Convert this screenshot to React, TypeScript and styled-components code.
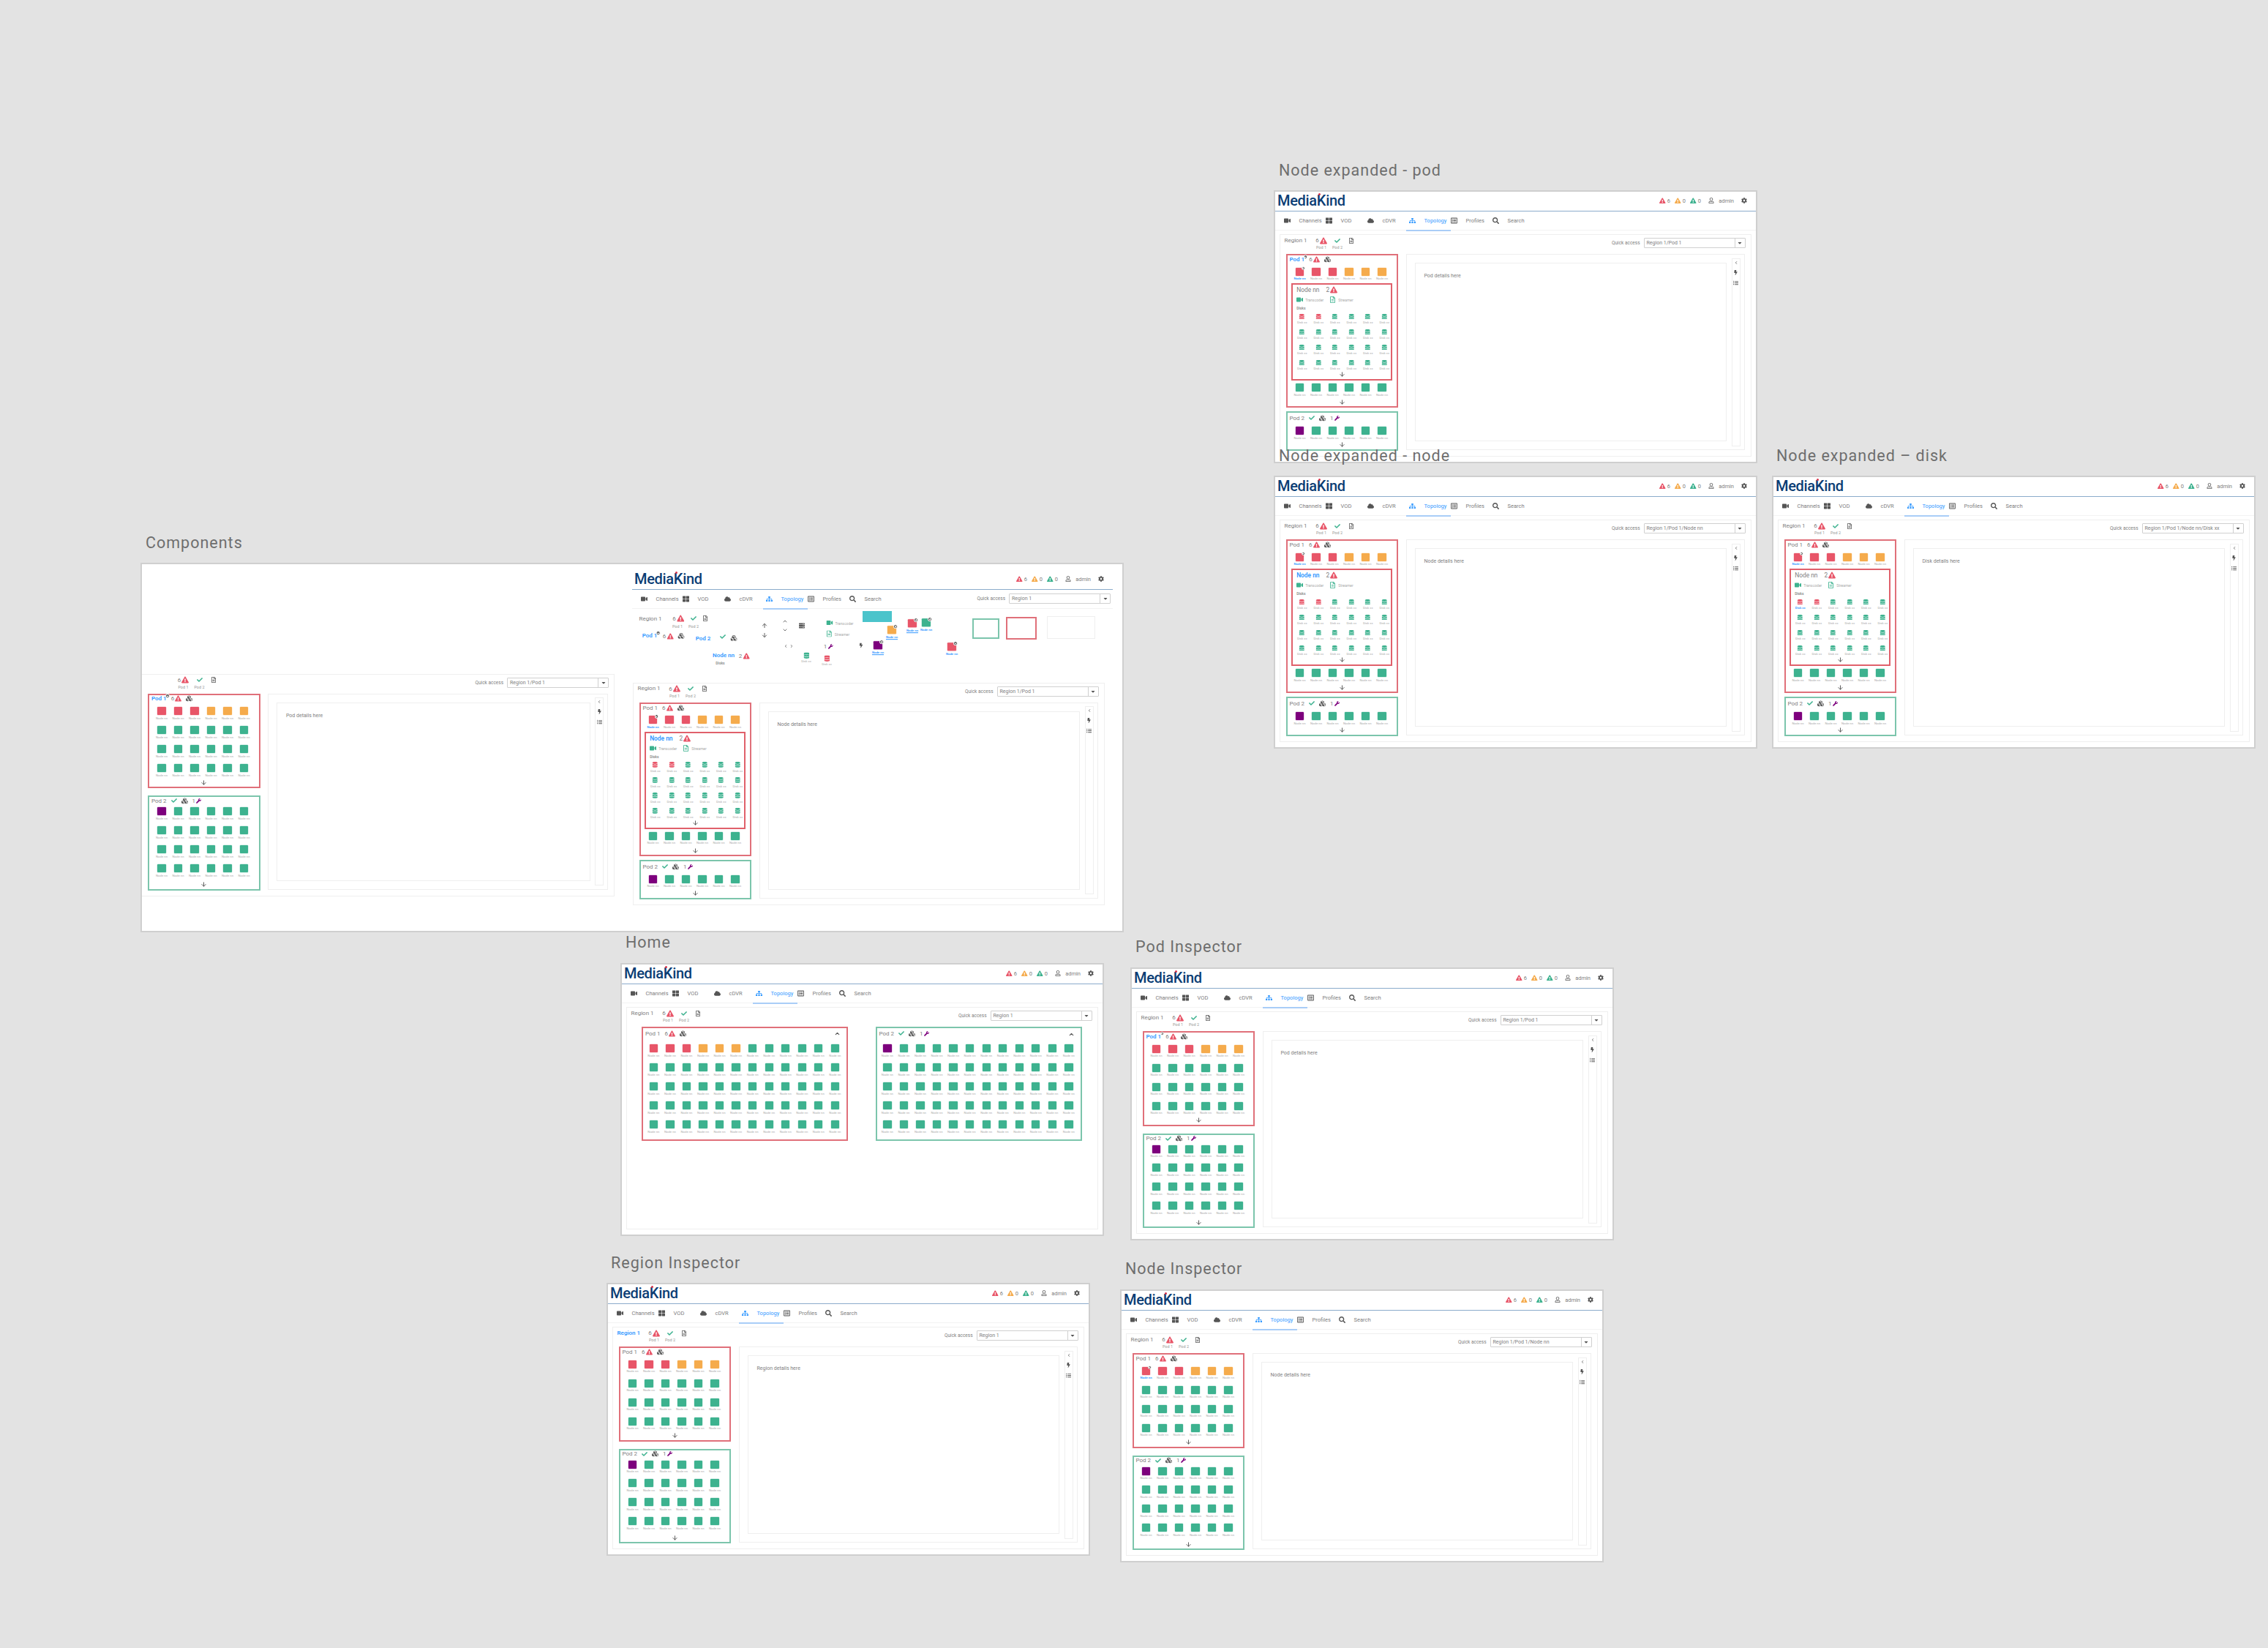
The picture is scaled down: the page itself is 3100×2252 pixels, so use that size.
import React from 'react';
import styled, { createGlobalStyle } from 'styled-components';
import {
  FaVideo, FaThLarge, FaCloud, FaSitemap, FaRegListAlt, FaSearch, FaRegUser, FaCog,
  FaExclamationTriangle, FaCheck, FaRegFileAlt, FaCubes, FaWrench, FaBolt, FaListUl,
  FaDatabase, FaCaretDown, FaServer,
} from 'react-icons/fa';
import { ArrowUp, ArrowDown, ChevronUp, ChevronDown, ChevronLeft, ChevronRight } from 'lucide-react';

const RED = '#E85568';
const ORANGE = '#F5AB4C';
const GREEN = '#3DB28F';
const PURPLE = '#7D007D';
const BLUE = '#3399FF';
const TEXT = '#808080';
const ICON = '#555555';
const RED_LINE = '#E0707A';
const GREEN_LINE = '#7CC5AC';
const HAIR = '#EFEFEF';

const Global = createGlobalStyle`
  html, body { margin: 0; padding: 0; background: #E3E3E3; }
  body { font-family: Roboto, "Liberation Sans", sans-serif; }
  * { box-sizing: border-box; }
`;

const Canvas = styled.div`
  position: relative;
  width: 3100px;
  height: 2252px;
  background: #e3e3e3;
  overflow: hidden;
`;

const BoardTitle = styled.div<{ $x: number; $y: number }>`
  position: absolute;
  left: ${p => p.$x}px;
  top: ${p => p.$y - 13}px;
  height: 26px;
  line-height: 26px;
  font-size: 21.5px;
  letter-spacing: 1px;
  color: #6e6e6e;
  white-space: nowrap;
  z-index: 2;
`;

const Artboard = styled.div<{ $x: number; $y: number; $w: number; $h: number }>`
  position: absolute;
  left: ${p => p.$x}px;
  top: ${p => p.$y}px;
  width: ${p => p.$w}px;
  height: ${p => p.$h}px;
  background: #fff;
  box-shadow: 0 0 0 2px #cfcfcf;
  overflow: hidden;
`;

const Frame = styled.div`
  width: 657px;
  height: 369px;
  display: flex;
  flex-direction: column;
`;

const SheetFrame = styled.div`
  position: absolute;
  left: 670px;
  top: 8px;
  width: 657px;
`;

const Placed = styled.div<{ $x: number; $y: number }>`
  position: absolute;
  left: ${p => p.$x}px;
  top: ${p => p.$y}px;
  transform: translate(-50%, -50%);
  display: flex;
  align-items: center;
  gap: 2px;
  white-space: nowrap;
`;

const PlacedPanel = styled.div<{ $x: number; $y: number }>`
  position: absolute;
  left: ${p => p.$x}px;
  top: ${p => p.$y}px;
`;

const Header = styled.header`
  height: 26.5px;
  flex: none;
  display: flex;
  align-items: center;
  padding: 0 12px 1.5px 3px;
  border-bottom: 1.5px solid #8babcb;
  font-size: 7.5px;
  color: ${TEXT};
`;

const Logo = styled.div`
  position: relative;
  font-family: Roboto, "Liberation Sans", sans-serif;
  font-size: 20px;
  font-weight: 500;
  line-height: 20px;
  letter-spacing: -0.3px;
  color: #0b3d74;
  &::after {
    content: '';
    position: absolute;
    left: 56px;
    top: 0;
    width: 3px;
    height: 3px;
    border-radius: 50%;
    background: #d8324a;
  }
`;

const Status = styled.span<{ $first?: boolean }>`
  display: flex;
  align-items: center;
  gap: 2px;
  width: 21px;
  margin-left: ${p => (p.$first ? 'auto' : '0')};
`;

const UserName = styled.span`
  display: flex;
  align-items: center;
  gap: 6px;
  margin-left: 4px;
`;

const GearSlot = styled.span`
  display: flex;
  margin-left: 10px;
`;

const Nav = styled.nav<{ $pad?: number }>`
  height: 26px;
  flex: none;
  display: flex;
  padding: 0 ${p => p.$pad ?? 0}px 0 8.5px;
  border-bottom: 1px solid #f3f3f3;
`;

const NavItem = styled.div<{ $active?: boolean }>`
  width: 57px;
  height: 26px;
  display: flex;
  align-items: center;
  gap: 8px;
  font-size: 7.5px;
  color: ${p => (p.$active ? BLUE : TEXT)};
  position: relative;
  &::after {
    content: '';
    display: ${p => (p.$active ? 'block' : 'none')};
    position: absolute;
    left: -1px;
    right: -3px;
    bottom: -1px;
    height: 1.5px;
    background: #a9cdf7;
  }
`;

const NavIcon = styled.span`
  width: 16px;
  display: flex;
  justify-content: center;
`;

const Panel = styled.section<{ $w: number; $h: number; $flat?: boolean }>`
  width: ${p => p.$w}px;
  height: ${p => p.$h}px;
  flex: none;
  display: flex;
  flex-direction: column;
  border: 1px solid ${HAIR};
  ${p => (p.$flat ? 'border-left: none;' : '')}
`;

const PanelSlot = styled.div`
  margin: 5.5px 0 0 5.5px;
`;

const RegionHead = styled.div`
  height: 26px;
  flex: none;
  display: flex;
  align-items: flex-start;
  padding: 0 7px 0 6px;
`;

const RegionTitle = styled.div<{ $active?: boolean }>`
  width: 39.5px;
  flex: none;
  margin-top: 2.5px;
  line-height: 10px;
  font-size: 8px;
  white-space: nowrap;
  font-weight: ${p => (p.$active ? 600 : 400)};
  color: ${p => (p.$active ? BLUE : TEXT)};
`;

const StatCol = styled.div<{ $w?: number }>`
  width: ${p => p.$w ?? 22}px;
  margin-top: 2.5px;
  display: flex;
  flex-direction: column;
  align-items: center;
`;

const StatTop = styled.div`
  height: 10px;
  display: flex;
  align-items: center;
  gap: 1px;
  font-size: 8px;
  color: ${TEXT};
`;

const StatLabel = styled.div`
  margin-top: 1.5px;
  font-size: 5.5px;
  line-height: 7px;
  color: #999;
  white-space: nowrap;
`;

const Quick = styled.div`
  display: flex;
  align-items: center;
  gap: 5px;
  margin-left: auto;
  margin-top: 4px;
  font-size: 6.5px;
  color: ${TEXT};
`;

const QuickInline = styled(Quick)`
  margin-top: 5px;
  height: 14px;
`;

const Select = styled.div`
  width: 139px;
  height: 14px;
  display: flex;
  align-items: center;
  justify-content: space-between;
  padding-left: 3px;
  border: 1px solid #d0d0d0;
  border-bottom-width: 1.5px;
  border-radius: 1px;
  font-size: 7px;
  color: ${TEXT};
  white-space: nowrap;
`;

const SelectArrow = styled.span`
  width: 14px;
  height: 100%;
  display: flex;
  align-items: center;
  justify-content: center;
  border-left: 1px solid #d0d0d0;
`;

const Body = styled.div<{ $home?: boolean }>`
  flex: 1;
  min-height: 0;
  display: flex;
  gap: ${p => (p.$home ? 37.5 : 10.5)}px;
  padding: ${p => (p.$home ? '0 0 0 20.5px' : '0 8px 8px 8px')};
  align-items: flex-start;
`;

const Sidebar = styled.div<{ $gap: number }>`
  width: 153.5px;
  flex: none;
  display: flex;
  flex-direction: column;
  gap: ${p => p.$gap}px;
`;

const Pod = styled.div<{ $ok?: boolean; $w: number; $h: number }>`
  width: ${p => p.$w}px;
  height: ${p => p.$h}px;
  flex: none;
  display: flex;
  flex-direction: column;
  border: 2px solid ${p => (p.$ok ? GREEN_LINE : RED_LINE)};
`;

const PodHead = styled.div<{ $h: number; $mb: number }>`
  height: ${p => p.$h}px;
  margin-bottom: ${p => p.$mb}px;
  flex: none;
  display: flex;
  align-items: center;
  gap: 6px;
  padding: 0 3px;
  font-size: 8px;
  color: ${TEXT};
`;

const PodName = styled.span<{ $active?: boolean }>`
  position: relative;
  white-space: nowrap;
  font-weight: ${p => (p.$active ? 600 : 400)};
  color: ${p => (p.$active ? BLUE : TEXT)};
`;

const Alarm = styled.span`
  display: flex;
  align-items: center;
  gap: 1px;
`;

const PodChevron = styled.span<{ $down?: number }>`
  margin-left: auto;
  margin-right: 5px;
  margin-top: ${p => p.$down ?? 0}px;
  display: flex;
`;

const Grid = styled.div<{ $cols: number; $gap: number; $pad: number; $pitch?: number }>`
  display: grid;
  grid-template-columns: repeat(${p => p.$cols}, ${p => p.$pitch ?? 22.5}px);
  grid-auto-rows: 17.7px;
  row-gap: ${p => p.$gap}px;
  padding-left: ${p => p.$pad}px;
  flex: none;
`;

const DiskRows = styled(Grid)`
  grid-auto-rows: 14.5px;
`;

const Cell = styled.div`
  display: flex;
  flex-direction: column;
  align-items: center;
`;

const NodeRect = styled.div<{ $c: string }>`
  position: relative;
  flex: none;
  width: 11.3px;
  height: 11px;
  border-radius: 1px;
  background: ${p => p.$c};
  box-shadow: 0 0 0 0.5px ${p => p.$c}55;
`;

const Badge = styled.span<{ $plus?: boolean }>`
  position: absolute;
  right: -2px;
  top: -2px;
  width: 5.5px;
  height: 5.5px;
  border-radius: 50%;
  background: #666;
  border: 0.5px solid #fff;
  &::before {
    content: '';
    position: absolute;
    left: 0.8px;
    right: 0.8px;
    top: 1.7px;
    height: 1px;
    background: #fff;
  }
  &::after {
    content: '';
    display: ${p => (p.$plus ? 'block' : 'none')};
    position: absolute;
    top: 0.8px;
    bottom: 0.8px;
    left: 1.7px;
    width: 1px;
    background: #fff;
  }
`;

const NameBadge = styled(Badge)`
  right: -4px;
  top: -2px;
`;

const TinyLabel = styled.div<{ $active?: boolean; $under?: boolean }>`
  flex: none;
  margin-top: 1.7px;
  font-size: 4.3px;
  line-height: 5px;
  white-space: nowrap;
  font-weight: ${p => (p.$active ? 600 : 400)};
  color: ${p => (p.$active ? BLUE : '#aaaaaa')};
  text-decoration: ${p => (p.$under ? 'underline' : 'none')};
`;

const ArrowBar = styled.div`
  height: 10px;
  margin: auto 0 1px;
  flex: none;
  display: flex;
  align-items: center;
  justify-content: center;
`;

const NodeBox = styled.div`
  width: 138px;
  height: 132.7px;
  margin: 4px 0 4px 5.7px;
  flex: none;
  display: flex;
  flex-direction: column;
  border: 2px solid #e0606b;
`;

const NodeTitle = styled.div`
  height: 13.4px;
  flex: none;
  display: flex;
  align-items: center;
  gap: 9px;
  padding-left: 5px;
  font-size: 8.4px;
  color: ${TEXT};
`;

const Services = styled.div`
  height: 14.6px;
  flex: none;
  display: flex;
  align-items: center;
  gap: 8px;
  padding-left: 5px;
`;

const Service = styled.span`
  display: flex;
  align-items: center;
  gap: 3px;
  font-size: 5px;
  color: #aaaaaa;
`;

const DisksTitle = styled.div`
  height: 9px;
  margin-bottom: 2.5px;
  flex: none;
  padding-left: 5px;
  font-size: 5px;
  line-height: 9px;
  font-weight: 600;
  color: #888;
`;

const Detail = styled.div`
  flex: 1;
  align-self: stretch;
  display: flex;
  border: 1px solid ${HAIR};
`;

const DetailInner = styled.div`
  flex: 1;
  margin: 11px 0 11px 11px;
  padding: 12px;
  border: 1px solid ${HAIR};
  font-size: 7px;
  line-height: 10px;
  color: ${TEXT};
`;

const Rail = styled.div`
  width: 12px;
  margin: 4.5px 5px 4.5px 6.5px;
  padding-top: 2px;
  display: flex;
  flex-direction: column;
  align-items: center;
  gap: 7px;
  border: 1px solid ${HAIR};
`;

const EmptyBox = styled.div<{ $x: number; $y: number; $w: number; $h: number; $c: string; $b: number }>`
  position: absolute;
  left: ${p => p.$x}px;
  top: ${p => p.$y}px;
  width: ${p => p.$w}px;
  height: ${p => p.$h}px;
  border: ${p => p.$b}px solid ${p => p.$c};
`;

const TealBlock = styled.div`
  position: absolute;
  left: 985px;
  top: 64px;
  width: 40px;
  height: 15px;
  background: #4bc4cb;
`;

const PodHeadText = styled.div`
  font-size: 8px;
  line-height: 10px;
  color: ${TEXT};
  white-space: nowrap;
`;

const Warn = ({ c = RED, s = 9 }: { c?: string; s?: number }) => <FaExclamationTriangle color={c} size={s} />;

const Tick = () => <FaCheck color={GREEN} size={8} />;

const Cluster = () => <FaCubes color={ICON} size={9} />;

const TopBar = () => (
  <Header>
    <Logo>MediaKind</Logo>
    <Status $first><Warn s={8.5} />6</Status>
    <Status><Warn c={ORANGE} s={8.5} />0</Status>
    <Status><Warn c={GREEN} s={8.5} />0</Status>
    <UserName><FaRegUser color={ICON} size={8} />admin</UserName>
    <GearSlot><FaCog color={ICON} size={8} /></GearSlot>
  </Header>
);

const NAV = [
  { icon: FaVideo, label: 'Channels' },
  { icon: FaThLarge, label: 'VOD' },
  { icon: FaCloud, label: 'cDVR' },
  { icon: FaSitemap, label: 'Topology', active: true },
  { icon: FaRegListAlt, label: 'Profiles' },
  { icon: FaSearch, label: 'Search' },
];

const NavBar = ({ children, pad }: { children?: React.ReactNode; pad?: number }) => (
  <Nav $pad={pad}>
    {NAV.map(({ icon: I, label, active }) => (
      <NavItem key={label} $active={active}>
        <NavIcon><I color={active ? BLUE : ICON} size={9} /></NavIcon>
        {label}
      </NavItem>
    ))}
    {children}
  </Nav>
);

const SelectBox = ({ value }: { value: string }) => (
  <Select>
    {value}
    <SelectArrow><FaCaretDown color={ICON} size={8} /></SelectArrow>
  </Select>
);

const RegionPanel = ({ w = 645, h = 304, quick, active, hideTitle, flat, children }: {
  w?: number; h?: number; quick: string; active?: boolean; hideTitle?: boolean; flat?: boolean; children: React.ReactNode;
}) => (
  <Panel $w={w} $h={h} $flat={flat}>
    <RegionHead>
      <RegionTitle $active={active}>{hideTitle ? '' : 'Region 1'}</RegionTitle>
      <StatCol>
        <StatTop>6<Warn s={10} /></StatTop>
        <StatLabel>Pod 1</StatLabel>
      </StatCol>
      <StatCol>
        <StatTop><Tick /></StatTop>
        <StatLabel>Pod 2</StatLabel>
      </StatCol>
      <StatCol $w={16}>
        <StatTop><FaRegFileAlt color={ICON} size={8} /></StatTop>
      </StatCol>
      <Quick>Quick access<SelectBox value={quick} /></Quick>
    </RegionHead>
    {children}
  </Panel>
);

type NodeDef = { c: string; selected?: boolean };

const podOneColours = (n: number): string[] =>
  Array.from({ length: n }, (_, i) => (i < 3 ? RED : i < 6 ? ORANGE : GREEN));
const podTwoColours = (n: number): string[] =>
  Array.from({ length: n }, (_, i) => (i === 0 ? PURPLE : GREEN));

const Nodes = ({ list, cols, gap, pad, pitch }: { list: NodeDef[]; cols: number; gap: number; pad: number; pitch?: number }) => (
  <Grid $cols={cols} $gap={gap} $pad={pad} $pitch={pitch}>
    {list.map((n, i) => (
      <Cell key={i}>
        <NodeRect $c={n.c}>{n.selected && <Badge />}</NodeRect>
        <TinyLabel $active={n.selected}>Node nn</TinyLabel>
      </Cell>
    ))}
  </Grid>
);

const toDefs = (cs: string[], firstSelected?: boolean): NodeDef[] =>
  cs.map((c, i) => ({ c, selected: !!firstSelected && i === 0 }));

const PodOneHead = ({ active, h, mb, chevron }: { active?: boolean; h: number; mb: number; chevron?: boolean }) => (
  <PodHead $h={h} $mb={mb}>
    <PodName $active={active}>Pod 1{active && <NameBadge />}</PodName>
    <Alarm>6<Warn /></Alarm>
    <Cluster />
    {chevron && <PodChevron><ChevronUp color={ICON} size={9} strokeWidth={3} /></PodChevron>}
  </PodHead>
);

const PodTwoHead = ({ h, mb, chevron }: { h: number; mb: number; chevron?: boolean }) => (
  <PodHead $h={h} $mb={mb}>
    <PodName>Pod 2</PodName>
    <Tick />
    <Cluster />
    <Alarm>1<FaWrench color={PURPLE} size={7} /></Alarm>
    {chevron && <PodChevron $down={3}><ChevronUp color={ICON} size={9} strokeWidth={3} /></PodChevron>}
  </PodHead>
);

const Down = () => (
  <ArrowBar><ArrowDown color={ICON} size={9} strokeWidth={2.5} /></ArrowBar>
);

const DetailPane = ({ text }: { text: string }) => (
  <Detail>
    <DetailInner>{text}</DetailInner>
    <Rail>
      <ChevronLeft color={ICON} size={6} strokeWidth={3} />
      <FaBolt color={ICON} size={7} />
      <FaListUl color={ICON} size={7} />
    </Rail>
  </Detail>
);

const InspectorBody = ({ text, activePod, pickFirst }: { text: string; activePod?: boolean; pickFirst?: boolean }) => (
  <Body>
    <Sidebar $gap={10}>
      <Pod $w={153.5} $h={129.5}>
        <PodOneHead active={activePod} h={10.6} mb={6} />
        <Nodes list={toDefs(podOneColours(24), pickFirst)} cols={6} gap={8.3} pad={5.8} />
        <Down />
      </Pod>
      <Pod $ok $w={153.5} $h={129.5}>
        <PodTwoHead h={10} mb={4} />
        <Nodes list={toDefs(podTwoColours(24))} cols={6} gap={8.3} pad={5.8} />
        <Down />
      </Pod>
    </Sidebar>
    <DetailPane text={text} />
  </Body>
);

const DISK_COLOURS = Array.from({ length: 24 }, (_, i) => (i < 2 ? RED : GREEN));

const ExpandedBody = ({ focus }: { focus: 'pod' | 'node' | 'disk' }) => (
  <Body>
    <Sidebar $gap={4.5}>
      <Pod $w={153.5} $h={210.4}>
        <PodOneHead active={focus === 'pod'} h={11} mb={5.5} />
        <Nodes list={toDefs(podOneColours(6), true)} cols={6} gap={0} pad={5.8} />
        <NodeBox>
          <NodeTitle>
            <PodName $active={focus === 'node'}>Node nn</PodName>
            <Alarm>2<Warn s={10} /></Alarm>
          </NodeTitle>
          <Services>
            <Service><FaVideo color={GREEN} size={9} />Transcoder</Service>
            <Service><FaRegFileAlt color={GREEN} size={9} />Streamer</Service>
          </Services>
          <DisksTitle>Disks</DisksTitle>
          <DiskRows $cols={6} $gap={6.5} $pad={1.3}>
            {DISK_COLOURS.map((c, i) => (
              <Cell key={i}>
                <FaDatabase color={c} size={8.5} />
                <TinyLabel $active={focus === 'disk' && i === 0}>Disk xx</TinyLabel>
              </Cell>
            ))}
          </DiskRows>
          <Down />
        </NodeBox>
        <Nodes list={toDefs(Array(6).fill(GREEN))} cols={6} gap={0} pad={5.8} />
        <Down />
      </Pod>
      <Pod $ok $w={153.5} $h={54}>
        <PodTwoHead h={15} mb={4} />
        <Nodes list={toDefs(podTwoColours(6))} cols={6} gap={0} pad={5.8} />
        <Down />
      </Pod>
    </Sidebar>
    <DetailPane text={`${focus === 'pod' ? 'Pod' : focus === 'node' ? 'Node' : 'Disk'} details here`} />
  </Body>
);

const HomeBody = () => (
  <Body $home>
    <Pod $w={282} $h={156}>
      <PodOneHead h={14} mb={8.3} chevron />
      <Nodes list={toDefs(podOneColours(60))} cols={12} gap={8.3} pad={3.1} pitch={22.55} />
    </Pod>
    <Pod $ok $w={282} $h={156}>
      <PodTwoHead h={14} mb={8.3} chevron />
      <Nodes list={toDefs(podTwoColours(60))} cols={12} gap={8.3} pad={3.1} pitch={22.55} />
    </Pod>
  </Body>
);

const AppFrame = ({ quick, active, children }: { quick: string; active?: boolean; children: React.ReactNode }) => (
  <Frame>
    <TopBar />
    <NavBar />
    <PanelSlot>
      <RegionPanel quick={quick} active={active}>{children}</RegionPanel>
    </PanelSlot>
  </Frame>
);

const Loose = ({ x, y, c, plus, under }: { x: number; y: number; c: string; plus?: boolean; under?: boolean }) => (
  <Placed $x={x} $y={y}>
    <Cell>
      <NodeRect $c={c}><Badge $plus={plus} /></NodeRect>
      <TinyLabel $active $under={under}>Node nn</TinyLabel>
    </Cell>
  </Placed>
);

const LooseDisk = ({ x, y, c }: { x: number; y: number; c: string }) => (
  <Placed $x={x} $y={y}>
    <Cell>
      <FaDatabase color={c} size={8.5} />
      <TinyLabel>Disk xx</TinyLabel>
    </Cell>
  </Placed>
);

const Sheet = () => (
  <Artboard $x={194} $y={771} $w={1340} $h={501}>
    <PlacedPanel $x={0} $y={149.5}>
      <RegionPanel w={646} quick="Region 1/Pod 1" hideTitle flat>
        <InspectorBody text="Pod details here" activePod />
      </RegionPanel>
    </PlacedPanel>

    <SheetFrame>
      <TopBar />
      <NavBar pad={3}>
        <QuickInline>Quick access<SelectBox value="Region 1" /></QuickInline>
      </NavBar>
    </SheetFrame>

    <Placed $x={695} $y={75}><PodHeadText>Region 1</PodHeadText></Placed>
    <Placed $x={733} $y={74}><StatTop>6<Warn s={10} /></StatTop></Placed>
    <Placed $x={754} $y={74}><Tick /></Placed>
    <Placed $x={770} $y={74}><FaRegFileAlt color={ICON} size={8} /></Placed>
    <Placed $x={732} $y={84}><StatLabel>Pod 1</StatLabel></Placed>
    <Placed $x={754} $y={84}><StatLabel>Pod 2</StatLabel></Placed>

    <Placed $x={694} $y={98}><PodHeadText><PodName $active>Pod 1<NameBadge /></PodName></PodHeadText></Placed>
    <Placed $x={719} $y={98}><StatTop>6<Warn /></StatTop></Placed>
    <Placed $x={737} $y={98}><Cluster /></Placed>
    <Placed $x={767} $y={102}><PodHeadText><PodName $active>Pod 2</PodName></PodHeadText></Placed>
    <Placed $x={794} $y={99}><Tick /></Placed>
    <Placed $x={809} $y={101}><Cluster /></Placed>
    <Placed $x={795} $y={125}><PodHeadText><PodName $active>Node nn</PodName></PodHeadText></Placed>
    <Placed $x={823} $y={125}><StatTop>2<Warn /></StatTop></Placed>
    <Placed $x={788} $y={137}><DisksTitle>Disks</DisksTitle></Placed>

    <Placed $x={851} $y={84}><ArrowUp color={ICON} size={9} strokeWidth={2.5} /></Placed>
    <Placed $x={851} $y={97}><ArrowDown color={ICON} size={9} strokeWidth={2.5} /></Placed>
    <Placed $x={879} $y={78}><ChevronUp color={ICON} size={8} strokeWidth={2.5} /></Placed>
    <Placed $x={879} $y={90}><ChevronDown color={ICON} size={8} strokeWidth={2.5} /></Placed>
    <Placed $x={902} $y={84}><FaServer color={ICON} size={8} /></Placed>
    <Placed $x={884} $y={112}>
      <ChevronLeft color={ICON} size={6} strokeWidth={3} />
      <ChevronRight color={ICON} size={6} strokeWidth={3} />
    </Placed>
    <LooseDisk x={908} y={128} c={GREEN} />
    <LooseDisk x={936} y={132} c={RED} />
    <Placed $x={954} $y={80}><Service><FaVideo color={GREEN} size={9} />Transcoder</Service></Placed>
    <Placed $x={951} $y={95}><Service><FaRegFileAlt color={GREEN} size={9} />Streamer</Service></Placed>
    <Placed $x={938} $y={112}><StatTop>1<FaWrench color={PURPLE} size={7} /></StatTop></Placed>
    <Placed $x={983} $y={111}><FaBolt color={ICON} size={7} /></Placed>

    <TealBlock />
    <Loose x={1025} y={93} c={ORANGE} plus under />
    <Loose x={1053} y={84} c={RED} plus under />
    <Loose x={1072} y={83} c={GREEN} plus />
    <Loose x={1006} y={114} c={PURPLE} plus under />
    <Loose x={1107} y={116} c={RED} />

    <EmptyBox $x={1135} $y={74} $w={37} $h={28} $c={GREEN_LINE} $b={2} />
    <EmptyBox $x={1181} $y={72} $w={42} $h={31} $c={RED_LINE} $b={2} />
    <EmptyBox $x={1237} $y={71} $w={66} $h={31} $c={HAIR} $b={1} />

    <PlacedPanel $x={670.5} $y={161.7}>
      <RegionPanel quick="Region 1/Pod 1">
        <ExpandedBody focus="node" />
      </RegionPanel>
    </PlacedPanel>
  </Artboard>
);

const TITLES = [
  { t: 'Components', x: 199, y: 742 },
  { t: 'Node expanded - pod', x: 1748, y: 233 },
  { t: 'Node expanded - node', x: 1748, y: 623 },
  { t: 'Node expanded – disk', x: 2428, y: 623 },
  { t: 'Home', x: 855, y: 1288 },
  { t: 'Pod Inspector', x: 1552, y: 1294 },
  { t: 'Region Inspector', x: 835, y: 1726 },
  { t: 'Node Inspector', x: 1538, y: 1734 },
];

const Board = ({ x, y, children }: { x: number; y: number; children: React.ReactNode }) => (
  <Artboard $x={x} $y={y} $w={657} $h={369}>{children}</Artboard>
);

export default function App() {
  return (
    <Canvas>
      <Global />
      <Sheet />
      <Board x={1743} y={262}>
        <AppFrame quick="Region 1/Pod 1"><ExpandedBody focus="pod" /></AppFrame>
      </Board>
      <Board x={1743} y={652}>
        <AppFrame quick="Region 1/Pod 1/Node nn"><ExpandedBody focus="node" /></AppFrame>
      </Board>
      <Board x={2424} y={652}>
        <AppFrame quick="Region 1/Pod 1/Node nn/Disk xx"><ExpandedBody focus="disk" /></AppFrame>
      </Board>
      <Board x={850} y={1318}>
        <AppFrame quick="Region 1"><HomeBody /></AppFrame>
      </Board>
      <Board x={1547} y={1324}>
        <AppFrame quick="Region 1/Pod 1"><InspectorBody text="Pod details here" activePod /></AppFrame>
      </Board>
      <Board x={831} y={1755}>
        <AppFrame quick="Region 1" active><InspectorBody text="Region details here" /></AppFrame>
      </Board>
      <Board x={1533} y={1764}>
        <AppFrame quick="Region 1/Pod 1/Node nn"><InspectorBody text="Node details here" pickFirst /></AppFrame>
      </Board>
      {TITLES.map(b => (
        <BoardTitle key={b.t} $x={b.x} $y={b.y}>{b.t}</BoardTitle>
      ))}
    </Canvas>
  );
}
